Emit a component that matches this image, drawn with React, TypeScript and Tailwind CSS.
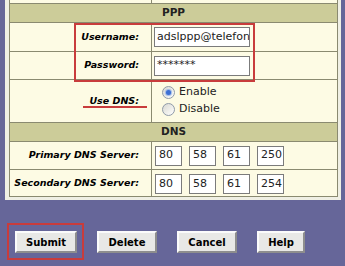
import React from "react";

function Radio({ checked }: { checked?: boolean }) {
  return (
    <span className="relative flex h-[13px] w-[13px] items-center justify-center rounded-full border border-[#8f9aa8] bg-gradient-to-br from-[#d9d9d4] via-[#ecece8] to-white">
      {checked && (
        <span className="h-[5px] w-[5px] rounded-full bg-[#3b6fd4] shadow-[0_0_1px_1px_rgba(120,160,230,0.7)]" />
      )}
    </span>
  );
}

function IpBox({ v }: { v: string }) {
  return (
    <div className="flex h-[20px] w-[27px] items-center border border-[#7b7b7b] bg-white pl-[3px] text-[11px] text-[#222]">
      {v}
    </div>
  );
}

function Label({ children }: { children: React.ReactNode }) {
  return (
    <div className="flex h-full w-[142px] shrink-0 items-center justify-end border-r border-[#8a8a70] pr-[12px] text-[9.5px] font-bold italic text-black">
      {children}
    </div>
  );
}

function Btn({ label, w }: { label: string; w: string }) {
  return (
    <div
      className={`flex h-[22px] ${w} items-center justify-center border-2 border-t-[#fbfbfb] border-l-[#fbfbfb] border-r-[#8e8e8e] border-b-[#8e8e8e] bg-[#e8e8e6] text-[10px] font-bold text-black`}
    >
      {label}
    </div>
  );
}

export default function App() {
  return (
    <div className="relative h-[266px] w-[345px] overflow-hidden bg-[#666699] [font-family:'DejaVu_Sans',Verdana,sans-serif]">
      <div className="ml-[5px] w-[336px] bg-[#efefe4] pb-[3px] pl-[4px] pr-[3px]">
        <div className="border-x border-b border-[#8a8a70] bg-[#fdfbe4]">
          {/* partial top row */}
          <div className="flex h-[4px] border-b border-[#8a8a70]">
            <div className="h-full w-[142px] border-r border-[#8a8a70]" />
          </div>
          {/* PPP header */}
          <div className="flex h-[19px] items-center justify-center border-b border-[#8a8a70] bg-[#cccc99] text-[10.5px] font-bold text-[#222]">
            PPP
          </div>
          {/* Username */}
          <div className="flex h-[29px] items-center border-b border-[#8a8a70]">
            <Label>Username:</Label>
            <div className="pl-[2px]">
              <div className="flex h-[20px] w-[96px] items-center overflow-hidden whitespace-nowrap border border-[#7b7b7b] bg-white pl-[2px] text-[11px] text-[#222]">
                adslppp@telefonica
              </div>
            </div>
          </div>
          {/* Password */}
          <div className="flex h-[28px] items-center border-b border-[#8a8a70]">
            <Label>Password:</Label>
            <div className="pl-[2px]">
              <div className="flex h-[20px] w-[96px] items-center overflow-hidden whitespace-nowrap border border-[#7b7b7b] bg-white pl-[2px] text-[11px] text-[#222]">
                *******
              </div>
            </div>
          </div>
          {/* Use DNS */}
          <div className="flex h-[43px] items-center border-b border-[#8a8a70]">
            <Label>Use DNS:</Label>
            <div className="flex flex-col pl-[10px] text-[11px] text-[#222]">
              <div className="flex h-[17px] items-center gap-[4px]">
                <Radio checked />
                <span>Enable</span>
              </div>
              <div className="flex h-[17px] items-center gap-[4px]">
                <Radio />
                <span>Disable</span>
              </div>
            </div>
          </div>
          {/* DNS header */}
          <div className="flex h-[19px] items-center justify-center border-b border-[#8a8a70] bg-[#cccc99] text-[10.5px] font-bold text-[#222]">
            DNS
          </div>
          {/* Primary */}
          <div className="flex h-[28px] items-center border-b border-[#8a8a70]">
            <Label>Primary DNS Server:</Label>
            <div className="flex gap-[7px] pl-[3px]">
              <IpBox v="80" />
              <IpBox v="58" />
              <IpBox v="61" />
              <IpBox v="250" />
            </div>
          </div>
          {/* Secondary */}
          <div className="flex h-[26px] items-center">
            <Label>Secondary DNS Server:</Label>
            <div className="flex gap-[7px] pl-[3px] pt-[2px]">
              <IpBox v="80" />
              <IpBox v="58" />
              <IpBox v="61" />
              <IpBox v="254" />
            </div>
          </div>
        </div>
      </div>

      <div className="ml-[15px] mt-[31px] flex gap-[20px]">
        <Btn label="Submit" w="w-[62px]" />
        <Btn label="Delete" w="w-[60px]" />
        <Btn label="Cancel" w="w-[60px]" />
        <Btn label="Help" w="w-[48px]" />
      </div>

      {/* red highlight boxes */}
      <div className="absolute left-[74px] top-[23px] h-[59px] w-[181px] border-2 border-[#c83c3c]" />
      <div className="absolute left-[83px] top-[106px] h-[2px] w-[64px] bg-[#c83c3c]" />
      <div className="absolute left-[7px] top-[223px] h-[37px] w-[77px] border-2 border-[#c83c3c]" />
    </div>
  );
}
